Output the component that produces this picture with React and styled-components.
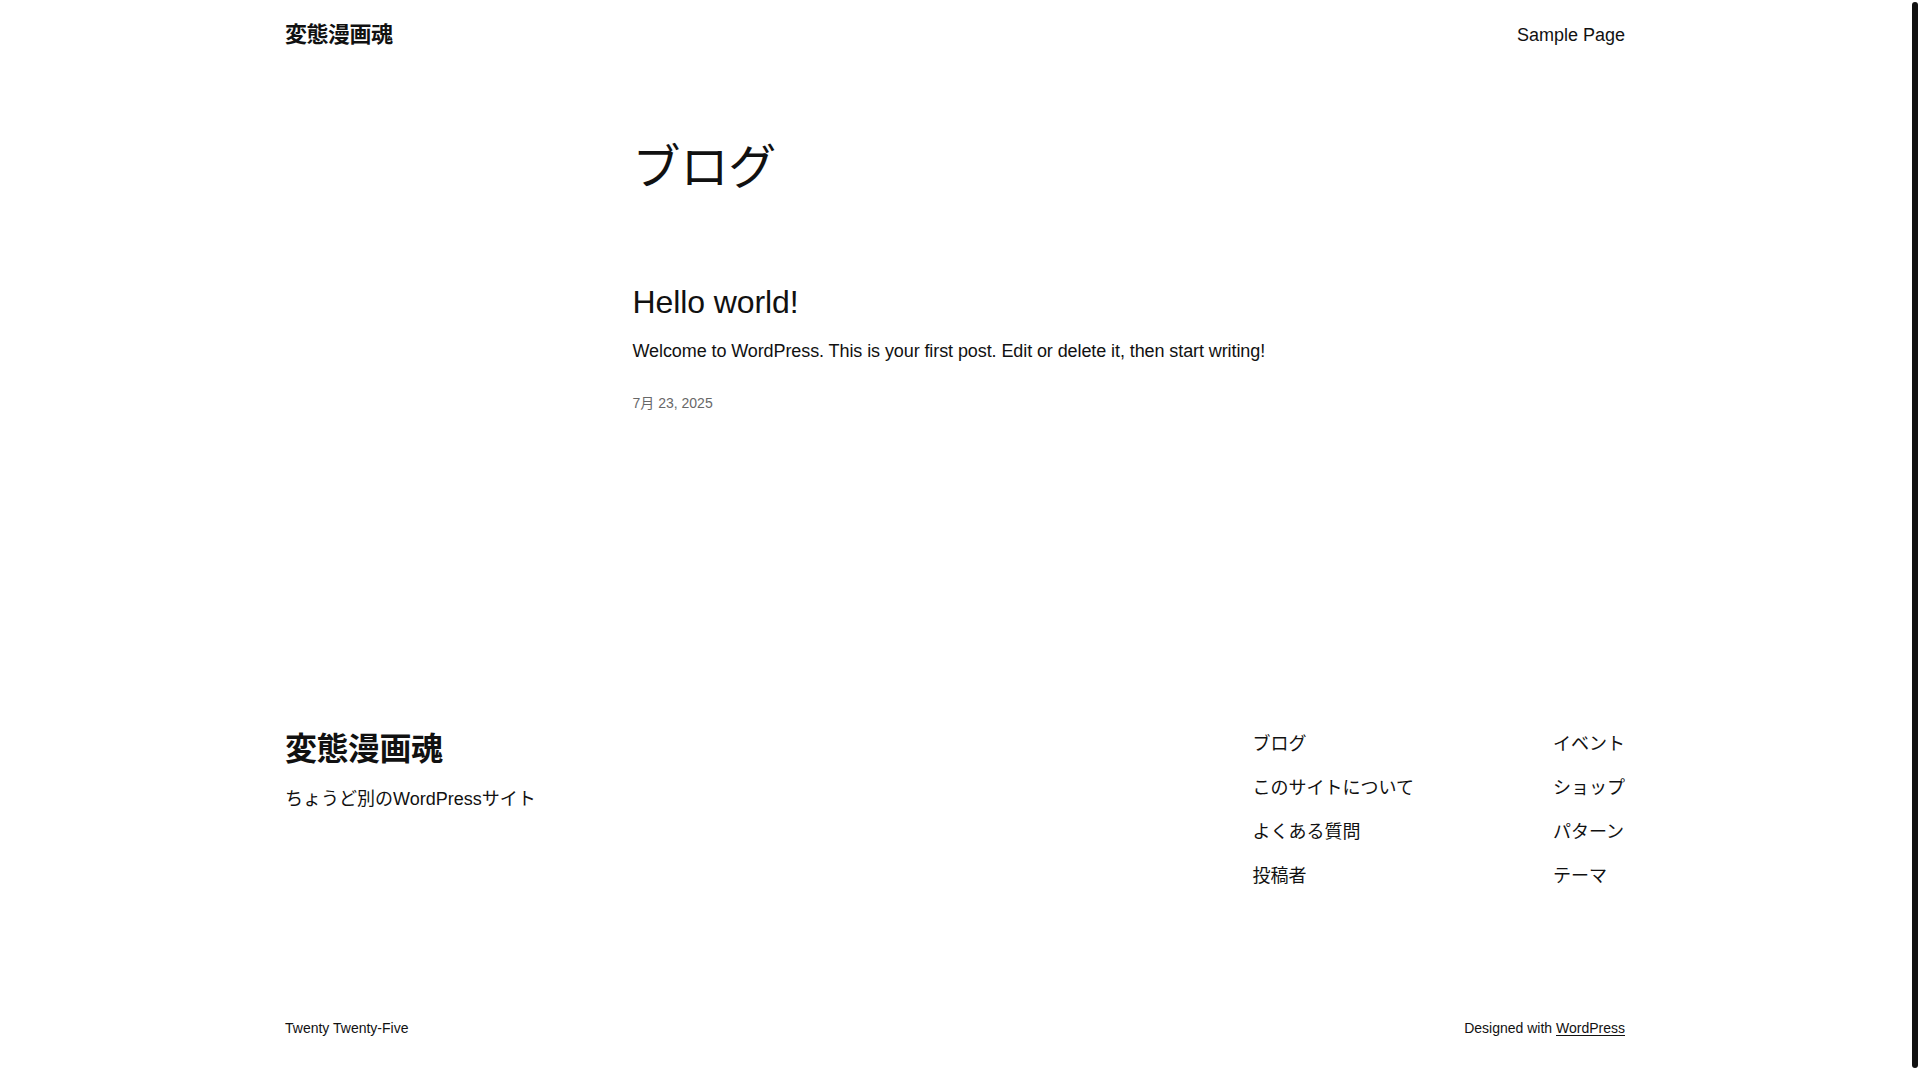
import React from 'react';
import styled, { createGlobalStyle } from 'styled-components';

const GlobalStyle = createGlobalStyle`
  html {
    background: #fff;
  }
  body {
    margin: 0;
    font-family: "Liberation Sans", "Noto Sans CJK JP", sans-serif;
    color: #111111;
  }
  a {
    color: inherit;
    text-decoration: none;
  }
`;

const Shell = styled.div`
  display: grid;
  grid-template-columns: 1fr 10px;
`;

const ScrollRail = styled.div`
  background: #fff;
`;

const ScrollThumb = styled.div`
  margin: 2px 2px 0;
  height: 1066px;
  border-radius: 3px;
  background: #111;
`;

const Page = styled.div`
  display: flex;
  flex-direction: column;
`;

const Header = styled.header`
  width: 1340px;
  margin: 0 auto;
  height: 70px;
  display: flex;
  align-items: center;
  justify-content: space-between;
`;

const SiteTitle = styled.a`
  font-size: ${(p) => p.size}px;
  font-weight: 700;
  line-height: 1.4;
  letter-spacing: -0.5px;
`;

const NavLink = styled.a`
  font-size: 18px;
  line-height: 1.6;
`;

const Main = styled.main`
  width: 645px;
  margin: 0 auto;
`;

const PageTitle = styled.h1`
  margin: 71px 0 0;
  font-size: 48px;
  font-weight: 400;
  line-height: 1.125;
  letter-spacing: -0.1px;
`;

const Post = styled.article`
  margin-top: 89px;
  display: flex;
  flex-direction: column;
`;

const PostTitle = styled.h2`
  margin: 0;
  font-size: 32px;
  font-weight: 400;
  line-height: 1.125;
  letter-spacing: -0.1px;
`;

const Excerpt = styled.p`
  margin: 17px 0 0;
  font-size: 18px;
  line-height: 1.6;
  letter-spacing: -0.09px;
`;

const PostDate = styled.time`
  margin-top: 26px;
  font-size: 14px;
  line-height: 1.6;
  color: #686868;
`;

const Footer = styled.footer`
  width: 1340px;
  margin: 0 auto;
  padding: 313px 0 50px;
`;

const FooterTop = styled.div`
  display: flex;
  justify-content: space-between;
  align-items: flex-start;
`;

const Brand = styled.div`
  display: flex;
  flex-direction: column;
`;

const Tagline = styled.p`
  margin: 13px 0 0;
  font-size: 18px;
  line-height: 1.6;
`;

const FooterNav = styled.nav`
  margin-top: 3px;
  display: grid;
  grid-template-rows: repeat(4, auto);
  grid-auto-flow: column;
  column-gap: 139px;
  row-gap: 15.3px;
`;

const FooterBottom = styled.div`
  margin-top: 126px;
  display: flex;
  justify-content: space-between;
  font-size: 14px;
  line-height: 1.6;
`;

const Credit = styled.a`
  text-decoration: underline;
  text-underline-offset: 2px;
`;

const footerLinks = [
  'ブログ',
  'このサイトについて',
  'よくある質問',
  '投稿者',
  'イベント',
  'ショップ',
  'パターン',
  'テーマ',
];

export default function App() {
  return (
    <Shell>
      <GlobalStyle />
      <Page>
        <Header>
          <SiteTitle size={22} href="#">変態漫画魂</SiteTitle>
          <NavLink href="#">Sample Page</NavLink>
        </Header>

        <Main>
          <PageTitle>ブログ</PageTitle>
          <Post>
            <PostTitle>Hello world!</PostTitle>
            <Excerpt>
              Welcome to WordPress. This is your first post. Edit or delete it, then start writing!
            </Excerpt>
            <PostDate>7月 23, 2025</PostDate>
          </Post>
        </Main>

        <Footer>
          <FooterTop>
            <Brand>
              <SiteTitle size={32} href="#">変態漫画魂</SiteTitle>
              <Tagline>ちょうど別のWordPressサイト</Tagline>
            </Brand>
            <FooterNav>
              {footerLinks.map((label) => (
                <NavLink key={label} href="#">{label}</NavLink>
              ))}
            </FooterNav>
          </FooterTop>
          <FooterBottom>
            <span>Twenty Twenty-Five</span>
            <span>
              Designed with <Credit href="#">WordPress</Credit>
            </span>
          </FooterBottom>
        </Footer>
      </Page>
      <ScrollRail>
        <ScrollThumb />
      </ScrollRail>
    </Shell>
  );
}
